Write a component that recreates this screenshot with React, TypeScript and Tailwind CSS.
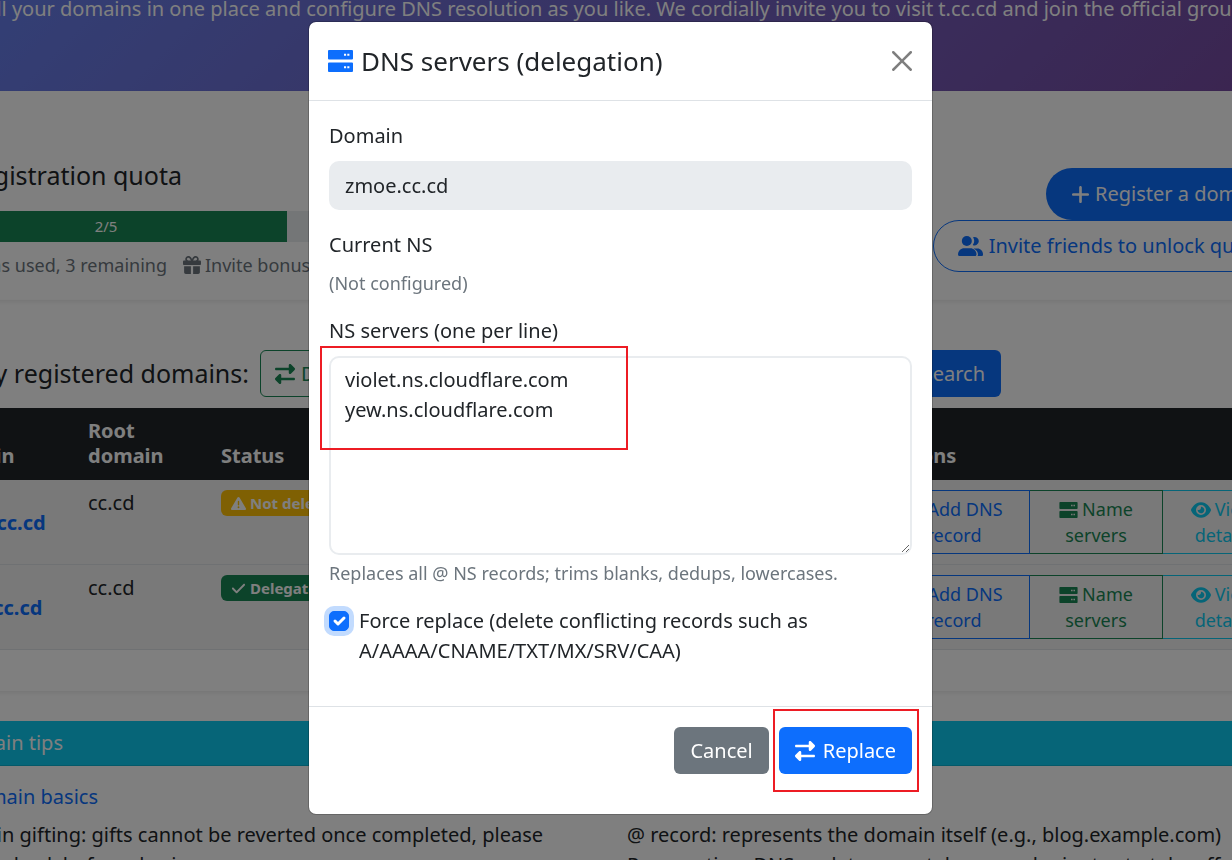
import { useState } from 'react';
import { FaCheck, FaEye, FaGift, FaPlus, FaRightLeft, FaTriangleExclamation } from 'react-icons/fa6';

interface DomainRow {
  name: string;
  root: string;
  delegated: boolean;
}

const domains: DomainRow[] = [
  { name: 'zmoe.cc.cd', root: 'cc.cd', delegated: false },
  { name: 'zmot.cc.cd', root: 'cc.cd', delegated: true },
];

const ServerIcon = ({ className }: { className?: string }) => (
  <svg viewBox="0 0 25 22" className={className} fill="currentColor">
    <path
      fillRule="evenodd"
      d="M1 0h23a1 1 0 0 1 1 1v7.500a1 1 0 0 1-1 1H1a1 1 0 0 1-1-1V1a1 1 0 0 1 1-1zM16 3.800v1.900h2.100V3.800zM19.300 3.800v1.900h2.100V3.800zM1 12.500h23a1 1 0 0 1 1 1V21a1 1 0 0 1-1 1H1a1 1 0 0 1-1-1v-7.500a1 1 0 0 1 1-1zM16 16.300v1.900h2.100v-1.900zM19.300 16.300v1.900h2.100v-1.900z"
    />
  </svg>
);

const FriendsIcon = ({ className }: { className?: string }) => (
  <svg viewBox="0 0 25 20" className={className} fill="currentColor">
    <circle cx="8.800" cy="5" r="5" />
    <path d="M15 1.300a4.200 4.200 0 1 1-.3 7.600 6.500 6.500 0 0 0 .3-7.600z" />
    <path d="M0 18.500C0 15 2.800 12.300 6.300 12.300h6c3.400 0 6.200 2.700 6.200 6.200 0 .8-.6 1.500-1.300 1.500H1.300C.6 20 0 19.300 0 18.500z" />
    <path d="M15 12.500h4.500c3 0 5.500 2.500 5.500 5.600v.6c0 .7-.6 1.300-1.300 1.300h-4.200c.3-.5.5-1 .5-1.600 0-2.400-1.600-4.500-4.500-5.900z" />
  </svg>
);

const StatusBadge = ({ delegated }: { delegated: boolean }) => (
  <span
    className={`inline-flex h-[26px] items-center gap-1 whitespace-nowrap rounded-md px-[10px] text-[15px] font-bold text-white ${
      delegated ? 'bg-[#198754]' : 'bg-[#ffc107]'
    }`}
  >
    {delegated ? <FaCheck /> : <FaTriangleExclamation />}
    {delegated ? 'Delegated' : 'Not delegated'}
  </span>
);

const RowActions = () => (
  <div className="flex text-[18px] leading-[26px]">
    <button className="w-[152px] shrink-0 border border-[#0d6efd] py-[5px] text-[#0d6efd]">
      <FaPlus className="mr-1 inline align-[-2px]" />
      Add DNS
      <br />
      record
    </button>
    <button className="w-[133px] shrink-0 border border-l-0 border-[#198754] py-[5px] text-[#198754]">
      <ServerIcon className="mr-1 inline h-4 w-[19px] align-[-2px]" />
      Name
      <br />
      servers
    </button>
    <button className="w-[120px] shrink-0 border border-l-0 border-[#0dcaf0] py-[5px] text-[#0dcaf0]">
      <FaEye className="mr-1 inline size-5 align-[-4px]" />
      View
      <br />
      details
    </button>
  </div>
);

const Dashboard = () => (
  <div className="h-screen overflow-hidden bg-white">
    <header className="flex h-[91px] justify-end overflow-hidden bg-linear-135 from-[#667eea] to-[#764ba2]">
      <p className="-mt-[6px] -mr-3 whitespace-nowrap text-[20px] leading-[30px] text-white">
        Manage all your domains in one place and configure DNS resolution as you like. We cordially
        invite you to visit t.cc.cd and join the official group
      </p>
    </header>

    <main className="-mr-[50px] -ml-[75px]">
      {/* Quota */}
      <section className="flex h-[209px] justify-between shadow-[0_2px_4px_rgba(0,0,0,0.08)]">
        <div className="w-[905px] pt-[66px]">
          <h5 className="flex w-[257px] items-center justify-end gap-2 whitespace-nowrap text-[25px] leading-9">
            Registration quota
          </h5>
          <div className="mt-[18px] h-[31px] bg-[#e9ecef]">
            <div className="flex h-full w-2/5 items-center justify-center bg-[#198754] text-[15px] text-white">
              2/5
            </div>
          </div>
          <div className="mt-[10px] flex items-center gap-4 text-[18px] leading-[26px] text-[#6c757d]">
            <span className="flex w-[242px] justify-end whitespace-nowrap">
              2 domains used, 3 remaining
            </span>
            <span className="flex items-center gap-1 whitespace-nowrap">
              <FaGift className="size-[18px]" />
              Invite bonus
            </span>
          </div>
        </div>
        <div className="flex flex-col items-end whitespace-nowrap pt-[77px] text-[20px]">
          <button className="flex h-[52px] items-center gap-1 rounded-full bg-[#0d6efd] pr-4 pl-6 text-white">
            <FaPlus className="size-[21px]" />
            Register a domain
          </button>
          <button className="flex h-[52px] items-center gap-[6px] rounded-full border border-[#0d6efd] pr-4 pl-6 text-[#0d6efd]">
            <FriendsIcon className="h-5 w-[25px]" />
            Invite friends to unlock quota
          </button>
        </div>
      </section>

      {/* Registered domains */}
      <section className="h-[391px] pt-[50px] shadow-[0_2px_4px_rgba(0,0,0,0.08)]">
        <div className="flex h-[47px] w-[1076px] items-center text-[20px]">
          <h5 className="flex w-[324px] justify-end whitespace-nowrap text-[25px]">
            My registered domains:
          </h5>
          <button className="ml-[11px] flex h-full items-center gap-[6px] whitespace-nowrap rounded-md border border-[#198754] px-[14px] text-[#198754]">
            <FaRightLeft className="size-5" />
            Domain gift
          </button>
          <button className="ml-auto h-full rounded-md bg-[#0d6efd] px-4 text-white">Search</button>
        </div>

        <table className="mt-[11px] w-full table-fixed text-left text-[20px] leading-[25px]">
          <colgroup>
            <col className="w-[153px]" />
            <col className="w-[133px]" />
            <col className="w-[600px]" />
            <col />
          </colgroup>
          <thead className="bg-[#212529] align-bottom text-white">
            <tr className="h-[72px]">
              <th className="pb-3 pl-3">Domain</th>
              <th className="pr-4 pb-3 pl-[10px]">Root domain</th>
              <th className="pb-3 pl-[10px]">Status</th>
              <th className="pb-3 pl-[71px]">Actions</th>
            </tr>
          </thead>
          <tbody className="bg-[#f2f2f2] align-top">
            {domains.map((domain) => (
              <tr key={domain.name} className="border-b border-[#dee2e6]">
                <td className="pl-3 align-middle">
                  <a href="#" className="font-bold text-[#0d6efd]">
                    {domain.name}
                  </a>
                </td>
                <td className="pt-[10px] pl-[10px]">{domain.root}</td>
                <td className="pt-[10px] pl-[10px]">
                  <StatusBadge delegated={domain.delegated} />
                </td>
                <td className="py-[10px] pl-[67px] text-center">
                  <RowActions />
                </td>
              </tr>
            ))}
          </tbody>
        </table>
      </section>

      {/* Tips */}
      <section className="mt-[30px] text-[20px] leading-[30px]">
        <h5 className="flex h-[45px] items-center border-b border-[#0bb2d3] bg-[#0dcaf0] text-white">
          <span className="flex w-[138px] justify-end">Domain tips</span>
        </h5>
        <div className="flex whitespace-nowrap pt-4">
          <div className="w-[702px]">
            <a href="#" className="flex w-[173px] justify-end text-[#0d6efd]">
              Domain basics
            </a>
            <ul className="mt-2 w-[618px]">
              <li className="flex justify-end">
                Domain gifting: gifts cannot be reverted once completed, please
              </li>
              <li className="flex w-[276px] justify-end">double-check before sharing</li>
            </ul>
          </div>
          <ul className="mt-[38px]">
            <li>@ record: represents the domain itself (e.g., blog.example.com)</li>
            <li>Propagation: DNS updates may take several minutes to take effect</li>
          </ul>
        </div>
      </section>
    </main>
  </div>
);

const DnsServersModal = () => {
  const [servers, setServers] = useState('violet.ns.cloudflare.com\nyew.ns.cloudflare.com');
  const [force, setForce] = useState(true);

  return (
    <div className="fixed inset-0 flex items-start justify-center bg-black/50 pt-[21px] pl-[9px]">
      <div
        role="dialog"
        aria-labelledby="modal-title"
        className="w-[625px] max-w-full rounded-lg border border-black/20 bg-white bg-clip-padding"
      >
        <div className="flex h-[79px] items-center justify-between border-b border-[#dee2e6] px-5">
          <h5 id="modal-title" className="flex items-center gap-2 text-[26px] leading-9">
            <ServerIcon className="-ml-px h-[22px] w-[25px] text-[#0d6efd]" />
            DNS servers (delegation)
          </h5>
          <button aria-label="Close" className="opacity-50">
            <svg viewBox="0 0 16 16" className="size-5" fill="#000">
              <path d="M.293.293a1 1 0 0 1 1.414 0L8 6.586 14.293.293a1 1 0 1 1 1.414 1.414L9.414 8l6.293 6.293a1 1 0 0 1-1.414 1.414L8 9.414l-6.293 6.293a1 1 0 0 1-1.414-1.414L6.586 8 .293 1.707a1 1 0 0 1 0-1.414z" />
            </svg>
          </button>
        </div>

        <div className="px-5 pt-5 pb-10 text-[20px] leading-[30px]">
          <label htmlFor="domain" className="block">
            Domain
          </label>
          <input
            id="domain"
            type="text"
            readOnly
            value="zmoe.cc.cd"
            className="mt-[10px] block h-[49px] w-full rounded-[10px] bg-[#e9ecef] px-4"
          />

          <p className="mt-5">Current NS</p>
          <p className="mt-[10px] text-[18px] leading-[26px] text-[#6c757d]">(Not configured)</p>

          <div className="relative mt-5">
            <label htmlFor="servers" className="block">
              NS servers (one per line)
            </label>
            <textarea
              id="servers"
              value={servers}
              onChange={(e) => setServers(e.target.value)}
              className="mt-[10px] block h-[199px] w-full rounded-[10px] border-2 border-[#e9ecef] px-[14px] py-[7px]"
            />
            <div className="pointer-events-none absolute top-[30px] -left-[9px] h-[104px] w-[308px] border-2 border-[#ed1c24]" />
          </div>
          <p className="mt-[5px] text-[18px] leading-[26px] text-[#6c757d]">
            Replaces all @ NS records; trims blanks, dedups, lowercases.
          </p>

          <div className="mt-5 flex gap-[10px]">
            <span className="relative mt-[5px] size-5 shrink-0">
              <input
                id="force"
                type="checkbox"
                checked={force}
                onChange={(e) => setForce(e.target.checked)}
                className="block size-5 appearance-none rounded-[5px] border border-[#0d6efd] bg-white ring-[5px] ring-[#c2dbfe] checked:bg-[#0d6efd]"
              />
              <svg
                viewBox="0 0 20 20"
                className="pointer-events-none absolute inset-0"
                fill="none"
                stroke="#fff"
                strokeWidth="3"
                strokeLinecap="round"
                strokeLinejoin="round"
              >
                <path d="m6 10 3 3 6-6" />
              </svg>
            </span>
            <label htmlFor="force">
              Force replace (delete conflicting records such as A/AAAA/CNAME/TXT/MX/SRV/CAA)
            </label>
          </div>
        </div>

        <div className="flex justify-end gap-[10px] border-t border-[#dee2e6] px-5 pt-5 pb-10 text-[20px] text-white">
          <button className="h-[47px] rounded-md bg-[#6c757d] px-4">Cancel</button>
          <div className="relative">
            <button className="flex h-[47px] items-center gap-2 rounded-md bg-[#0d6efd] px-4">
              <FaRightLeft className="size-5" />
              Replace
            </button>
            <div className="pointer-events-none absolute -top-[18px] -right-[7px] -bottom-[18px] -left-[6px] border-2 border-[#ed1c24]" />
          </div>
        </div>
      </div>
    </div>
  );
};

const App = () => (
  <div className="font-['Noto_Sans','Open_Sans',sans-serif] text-[#212529]">
    <Dashboard />
    <DnsServersModal />
  </div>
);

export default App;
